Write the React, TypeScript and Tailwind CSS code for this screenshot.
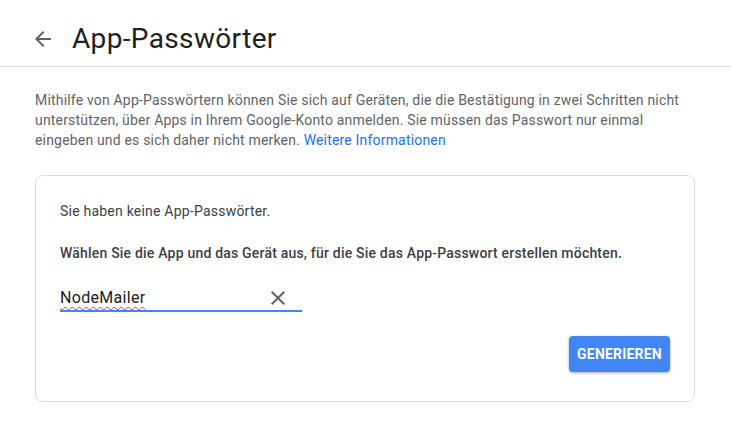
import { useState } from 'react';

const font = { fontFamily: 'Roboto, "Noto Sans", Arial, sans-serif' };

function ArrowBack() {
    return (
        <svg viewBox="0 0 24 24" className="w-6 h-6" fill="#5f6368">
            <path d="M20 11H7.83l5.59-5.59L12 4l-8 8 8 8 1.41-1.41L7.83 13H20v-2z" />
        </svg>
    );
}

function CloseIcon() {
    return (
        <svg viewBox="0 0 24 24" className="w-6 h-6" fill="#5f6368">
            <path d="M19 6.41 17.59 5 12 10.59 6.41 5 5 6.41 10.59 12 5 17.59 6.41 19 12 13.41 17.59 19 19 17.59 13.41 12z" />
        </svg>
    );
}

export default function App() {
    const [name, setName] = useState('NodeMailer');

    return (
        <div className="w-[731px] h-[434px] bg-white overflow-hidden" style={font}>
            {/* Header */}
            <div className="h-[67px] pt-3 border-b border-[#dadce0] flex items-center">
                <div className="ml-[31px] flex items-center gap-[17px]">
                    <ArrowBack />
                    <h1 className="text-[28px] leading-9 tracking-[0.35px] text-[#202124] font-normal">App-Passwörter</h1>
                </div>
            </div>

            <div className="ml-[35px] w-[660px]">
                {/* Intro */}
                <p className="mt-[23px] text-[14px] leading-5 tracking-[0.18px] text-[#5f6368]">
                    Mithilfe von App-Passwörtern können Sie sich auf Geräten, die die Bestätigung in zwei Schritten nicht
                    unterstützen, über Apps in Ihrem Google-Konto anmelden. Sie müssen das Passwort nur einmal
                    eingeben und es sich daher nicht merken.{' '}
                    <a href="#" className="text-[#1a73e8]">Weitere Informationen</a>
                </p>

                {/* Card */}
                <div className="mt-[25px] border border-[#dadce0] rounded-lg px-6 pt-[25px] pb-[29px]">
                    <p className="text-[14px] leading-5 tracking-[0.22px] text-[#3c4043]">Sie haben keine App-Passwörter.</p>
                    <p className="mt-[22px] text-[14px] leading-5 tracking-[0.2px] font-medium text-[#3c4043]">
                        Wählen Sie die App und das Gerät aus, für die Sie das App-Passwort erstellen möchten.
                    </p>

                    <div className="mt-[17px] w-[242px] h-[32px] pt-[6px] border-b-2 border-[#4285f4] flex items-center">
                        <input
                            value={name}
                            onChange={(e) => setName(e.target.value)}
                            className="flex-1 min-w-0 text-[16px] leading-6 tracking-[0.3px] text-[#202124] outline-none bg-transparent underline decoration-wavy decoration-[#e53935] decoration-1 underline-offset-[3px]"
                            style={font}
                        />
                        <div className="mr-[12px]">
                            <CloseIcon />
                        </div>
                    </div>

                    <div className="mt-6 flex justify-end">
                        <button className="h-9 w-[101px] rounded bg-[#4285f4] text-white text-[14px] font-bold tracking-[0.2px] shadow-[0_1px_3px_rgba(0,0,0,0.35)]">
                            GENERIEREN
                        </button>
                    </div>
                </div>
            </div>
        </div>
    );
}
